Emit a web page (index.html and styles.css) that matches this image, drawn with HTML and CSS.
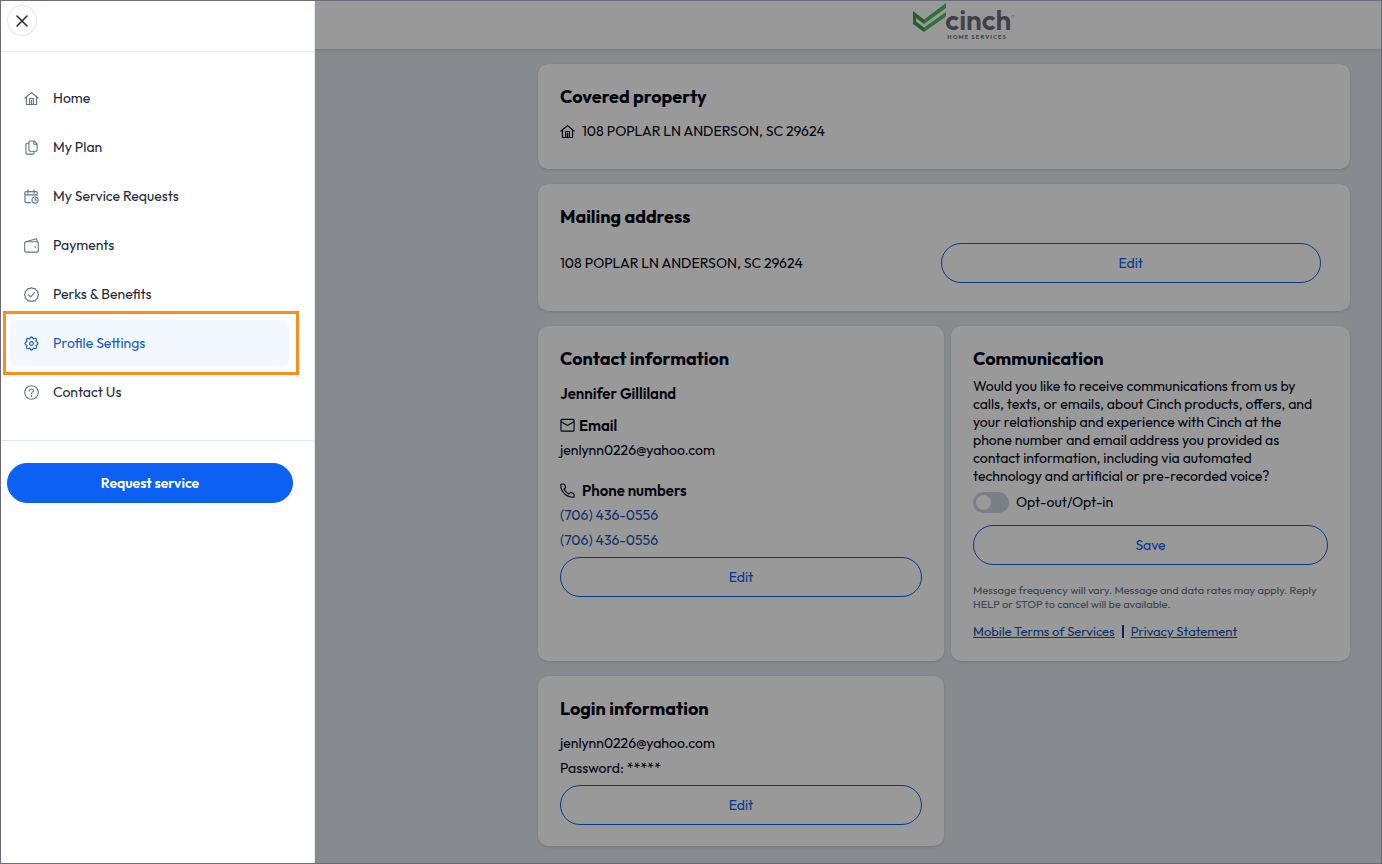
FILE: index.html
```html
<!DOCTYPE html>
<html lang="en">
<head>
  <meta charset="UTF-8">
  <meta name="viewport" content="width=device-width, initial-scale=1.0">
  <title>Profile Settings | Cinch Home Services</title>
  <link rel="stylesheet" href="styles.css">
</head>
<body>
  <!-- Shared icon shapes -->
  <svg class="sprite" xmlns="http://www.w3.org/2000/svg" aria-hidden="true">
    <symbol id="icon-home" viewBox="0 0 16 16">
      <path d="M1 7.500 8 1.700l7 5.800M2.600 6.500v7.900h10.800V6.500M6 14.400V8h4v6.400M8 10v4.400"/>
    </symbol>
  </svg>

  <div class="page">
    <header class="site-header">
      <a class="logo" href="#" aria-label="Cinch Home Services">
        <svg class="logo__mark" viewBox="0 0 34 29" aria-hidden="true">
          <path fill="#3f9f50" d="M0 8l11 8.500V21l-8-6v3.500l8 6V29L0 21z"/>
          <path fill="#4fbf60" d="M11 16.500 33 0v5L11 21zM11 24.500 33 9v4.500L11 29z"/>
        </svg>
        <span class="logo__text">
          <span class="logo__name">cinch<span class="logo__reg">®</span></span>
          <span class="logo__tag">HOME SERVICES</span>
        </span>
      </a>
    </header>

    <main class="content">
      <section class="card card--wide card--property">
        <h2 class="card__title">Covered property</h2>
        <p class="icon-row icon-row--wide"><svg class="icon"><use href="#icon-home"/></svg>108 POPLAR LN ANDERSON, SC 29624</p>
      </section>

      <section class="card card--wide card--mailing">
        <h2 class="card__title">Mailing address</h2>
        <div class="mailing">
          <p>108 POPLAR LN ANDERSON, SC 29624</p>
          <button class="btn" type="button">Edit</button>
        </div>
      </section>

      <section class="card">
        <h2 class="card__title">Contact information</h2>
        <p class="strong">Jennifer Gilliland</p>
        <h3 class="icon-row strong email-title">
          <svg class="icon" viewBox="0 0 16 16"><rect x="1" y="1.500" width="14" height="12.500" rx="1"/><path d="m1.300 4 6.700 4 6.700-4"/></svg>Email
        </h3>
        <p>jenlynn0226@yahoo.com</p>
        <h3 class="icon-row icon-row--wide strong phone-title">
          <svg class="icon" viewBox="0 0 16 16"><path d="M3.800 1H1.700C1.200 1 .8 1.400.8 2 .8 9.200 6.800 15.200 14 15.200c.6 0 1-.4 1-.9v-2.100c0-.5-.2-.8-.6-1l-2.700-1.100c-.4-.1-.8 0-1 .3l-1.200 1.400C7.300 10.700 5.300 8.700 4.200 6.500l1.400-1.200c.3-.2.400-.6.300-1L4.800 1.600C4.600 1.200 4.300 1 3.800 1z"/></svg>Phone numbers
        </h3>
        <p><a class="phone" href="tel:7064360556">(706) 436-0556</a></p>
        <p><a class="phone" href="tel:7064360556">(706) 436-0556</a></p>
        <button class="btn" type="button">Edit</button>
      </section>

      <section class="card card--communication">
        <h2 class="card__title card__title--tight">Communication</h2>
        <p class="consent">Would you like to receive communications from us by calls, texts, or emails, about Cinch products, offers, and your relationship and experience with Cinch at the phone number and email address you provided as contact information, including via automated technology and artificial or pre-recorded voice?</p>
        <div class="toggle">
          <input class="toggle__input" type="checkbox" role="switch" id="opt">
          <label for="opt">Opt-out/Opt-in</label>
        </div>
        <button class="btn" type="button">Save</button>
        <p class="note">Message frequency will vary. Message and data rates may apply. Reply HELP or STOP to cancel will be available.</p>
        <p class="legal">
          <a href="#">Mobile Terms of Services</a>
          <span class="legal__bar"></span>
          <a href="#">Privacy Statement</a>
        </p>
      </section>

      <section class="card card--login">
        <h2 class="card__title">Login information</h2>
        <p>jenlynn0226@yahoo.com</p>
        <p>Password: *****</p>
        <button class="btn" type="button">Edit</button>
      </section>
    </main>
  </div>

  <div class="backdrop"></div>

  <!-- Navigation drawer -->
  <aside class="drawer">
    <div class="drawer__top">
      <button class="close" type="button" aria-label="Close menu">
        <svg viewBox="0 0 12 12"><path d="m1 1 10 10M11 1 1 11"/></svg>
      </button>
    </div>
    <nav class="nav">
      <a class="nav__link" href="#"><svg class="icon"><use href="#icon-home"/></svg>Home</a>
      <a class="nav__link" href="#">
        <svg class="icon" viewBox="0 0 16 16"><path d="M6.500 1h4.300L14 4.200v6.600c0 .7-.5 1.200-1.200 1.200H6.500c-.7 0-1.200-.5-1.200-1.200V2.200C5.300 1.500 5.800 1 6.500 1zM10.500 1v3.500H14M5.300 3.500H3.200C2.500 3.500 2 4 2 4.700v9.100c0 .7.5 1.200 1.200 1.200h6.300c.7 0 1.200-.5 1.200-1.200V12"/></svg>My Plan
      </a>
      <a class="nav__link" href="#">
        <svg class="icon" viewBox="0 0 16 16"><path d="M7 14.500H2.200c-.7 0-1.200-.5-1.200-1.200V4c0-.7.5-1.200 1.200-1.200h10.600c.7 0 1.200.5 1.200 1.200v3M1 6.300h13M4.200.8v3.700M10.800.8v3.700"/><circle cx="11.800" cy="11.800" r="3.300"/><path d="M11.800 10v1.900h1.300"/></svg>My Service Requests
      </a>
      <a class="nav__link" href="#">
        <svg class="icon" viewBox="0 0 16 16"><rect x=".8" y="4" width="14.400" height="11" rx="1.200"/><path d="m2 4 10.200-3c.8-.2 1.300.1 1.500.8l.5 2.200M12 9.200v.9"/></svg>Payments
      </a>
      <a class="nav__link" href="#">
        <svg class="icon" viewBox="0 0 16 16"><path d="m8 .7 1.800 1 2.100-.1 1 1.800 1.800 1L14.600 6.500l1 1.700-1 1.700.1 2.100-1.800 1-1 1.800-2.100-.1-1.800 1-1.800-1-2.100.1-1-1.800-1.800-1 .1-2.100-1-1.700 1-1.700-.1-2.100 1.800-1 1-1.800 2.100.1z"/><path d="m4.900 8.500 2.200 2 4-4.500"/></svg>Perks &amp; Benefits
      </a>
      <div class="nav__highlight">
        <a class="nav__link nav__link--active" href="#" aria-current="page">
          <svg class="icon" viewBox="0 0 16 16"><path d="M6.700 1.800 8 .8l1.300 1 .5 1.300 1.500-.7 1.700.3.300 1.700-.7 1.500 1.500.6.9 1.500-.9 1.500-1.500.6.700 1.500-.3 1.700-1.700.3-1.500-.7-.5 1.300-1.300 1-1.300-1-.5-1.300-1.500.7-1.700-.3-.3-1.700.7-1.500-1.500-.6L1 8l.9-1.500 1.500-.6-.7-1.500.3-1.700 1.700-.3 1.500.7z"/><circle cx="8" cy="8" r="2"/></svg>Profile Settings
        </a>
      </div>
      <a class="nav__link" href="#">
        <svg class="icon" viewBox="0 0 16 16"><circle cx="8" cy="8" r="7.200"/><path d="M5.900 6.200c0-1.200.9-2 2.100-2s2.100.8 2.100 1.900c0 1.500-2.100 1.600-2.100 3.200M8 11v1.200"/></svg>Contact Us
      </a>
    </nav>
    <div class="drawer__bottom">
      <button class="btn btn--primary" type="button">Request service</button>
    </div>
  </aside>
</body>
</html>
```
FILE: styles.css
```css
:root {
  --ink: #020617;
  --slate: #1e293b;
  --muted: #64748b;
  --line: #e2e8f0;
  --blue: #0d61f2;
  --drawer: 314px;
}
* {
  box-sizing: border-box;
}
body {
  margin: 0;
  min-height: 100vh;
  font-family: Outfit, Lato, sans-serif;
  font-size: 14px;
  line-height: 25px;
  color: var(--ink);
  background: var(--line);
}
body::after {
  content: "";
  position: fixed;
  inset: 0;
  border: 1px solid #6b6b7b;
  z-index: 3;
  pointer-events: none;
}
h2, h3, p {
  margin: 0;
}
button {
  font: inherit;
  cursor: pointer;
}
.sprite {
  display: none;
}
.icon {
  width: 15px;
  height: 15px;
  flex: none;
  fill: none;
  stroke: currentColor;
  stroke-width: 1.2;
  stroke-linecap: round;
  stroke-linejoin: round;
}
/* ---------- Page ---------- */
.site-header {
  display: flex;
  justify-content: center;
  height: 49px;
  padding: 3px 0 0 546px;
  background: #fff;
  box-shadow: 0 1px 3px rgba(0, 0, 0, 0.15);
}
.logo {
  display: flex;
  color: #6b6b7c;
  text-decoration: none;
}
.logo__mark {
  width: 34px;
  height: 29px;
}
.logo__text {
  display: flex;
  flex-direction: column;
  margin: 3px 0 0 -2px;
}
.logo__name {
  display: flex;
  font-size: 28px;
  line-height: 28px;
  font-weight: 600;
}
.logo__reg {
  font-size: 6px;
  line-height: 22px;
}
.logo__tag {
  font-size: 6px;
  line-height: 6px;
  font-weight: 600;
  letter-spacing: 1px;
  padding-left: 2px;
}
.content {
  display: grid;
  grid-template-columns: 406fr 399fr;
  gap: 15px 7px;
  padding: 15px 32px 18px 538px;
}
.card {
  padding: 22px;
  background: #fff;
  border-radius: 10px;
  box-shadow: 0 1px 3px rgba(0, 0, 0, 0.15);
}
.card--wide {
  grid-column: 1 / -1;
}
.card--property {
  padding-bottom: 25px;
}
.card--mailing {
  padding: 22px 29px 28px 22px;
}
.card--communication {
  padding-bottom: 17px;
}
.card--login {
  padding-bottom: 21px;
}
.card__title {
  margin-bottom: 11px;
  font-size: 18px;
  line-height: 22px;
  font-weight: 700;
}
.card__title--tight {
  margin-bottom: 7px;
}
.icon-row {
  display: flex;
  align-items: center;
  gap: 4px;
}
.icon-row--wide {
  gap: 7px;
}
.strong {
  font-size: 15px;
  font-weight: 600;
}
.email-title {
  margin-top: 7px;
}
.phone-title {
  margin-top: 15px;
}
.mailing {
  display: grid;
  grid-template-columns: 1fr 1fr;
  align-items: center;
  padding-top: 4px;
}
.phone {
  color: #1554b4;
  text-decoration: none;
}
.btn {
  width: 100%;
  height: 40px;
  padding: 0 16px;
  border: 1px solid var(--blue);
  border-radius: 20px;
  background: transparent;
  color: var(--blue);
}
.card p + .btn {
  margin-top: 4px;
}
.card .mailing .btn {
  margin-top: 0;
}
.consent {
  padding-right: 8px;
  line-height: 18px;
}
.toggle {
  display: flex;
  align-items: center;
  gap: 7px;
  margin: 5px 0 10px;
}
.toggle__input {
  appearance: none;
  display: flex;
  align-items: center;
  width: 36px;
  height: 21px;
  margin: 0;
  padding: 3px;
  border-radius: 11px;
  background: #cbd5e1;
}
.toggle__input::before {
  content: "";
  width: 15px;
  height: 15px;
  border-radius: 50%;
  background: #fff;
}
.toggle__input:checked {
  justify-content: flex-end;
  background: var(--blue);
}
.note {
  margin-top: 18px;
  font-size: 11px;
  line-height: 14px;
  color: var(--muted);
}
.legal {
  display: flex;
  align-items: center;
  gap: 7px;
  margin-top: 8px;
  font-size: 13px;
}
.legal a {
  color: #1554b4;
}
.legal__bar {
  width: 2px;
  height: 13px;
  background: #1e3a8a;
}
/* ---------- Drawer ---------- */
.backdrop {
  position: fixed;
  inset: 0;
  background: rgba(0, 0, 0, 0.4);
  z-index: 1;
}
.drawer {
  position: fixed;
  inset: 0 auto 0 0;
  width: calc(var(--drawer) + 1px);
  padding-left: 1px;
  background: #fff;
  border-right: 1px solid var(--line);
  z-index: 2;
}
.drawer__top {
  height: 52px;
  padding: 5px 6px;
  border-bottom: 1px solid var(--line);
}
.close {
  display: grid;
  place-items: center;
  width: 30px;
  height: 31px;
  padding: 0;
  border: 1px solid var(--line);
  border-radius: 50%;
  background: #fff;
}
.close svg {
  width: 12px;
  height: 12px;
  stroke: var(--slate);
  stroke-width: 1.5;
  stroke-linecap: round;
}
.nav {
  display: flex;
  flex-direction: column;
  gap: 3px;
  padding: 23px 25px 25px 9px;
  border-bottom: 1px solid var(--line);
}
.nav__link {
  display: flex;
  align-items: center;
  gap: 14px;
  height: 46px;
  padding: 0 14px;
  border-radius: 6px;
  color: var(--slate);
  text-decoration: none;
}
.nav__link .icon {
  color: var(--muted);
}
.nav__link--active,
.nav__link--active .icon {
  color: #1859cf;
}
.nav__link--active {
  background: #f3f8ff;
}
/* Orange frame around the current item */
.nav__highlight {
  position: relative;
}
.nav__highlight::after {
  content: "";
  position: absolute;
  inset: -9px -10px -9px -7px;
  border: 3px solid #ff8c1a;
  pointer-events: none;
}
.drawer__bottom {
  padding: 22px 21px 22px 6px;
}
.btn--primary {
  background: var(--blue);
  color: #fff;
  font-weight: 600;
}
```
